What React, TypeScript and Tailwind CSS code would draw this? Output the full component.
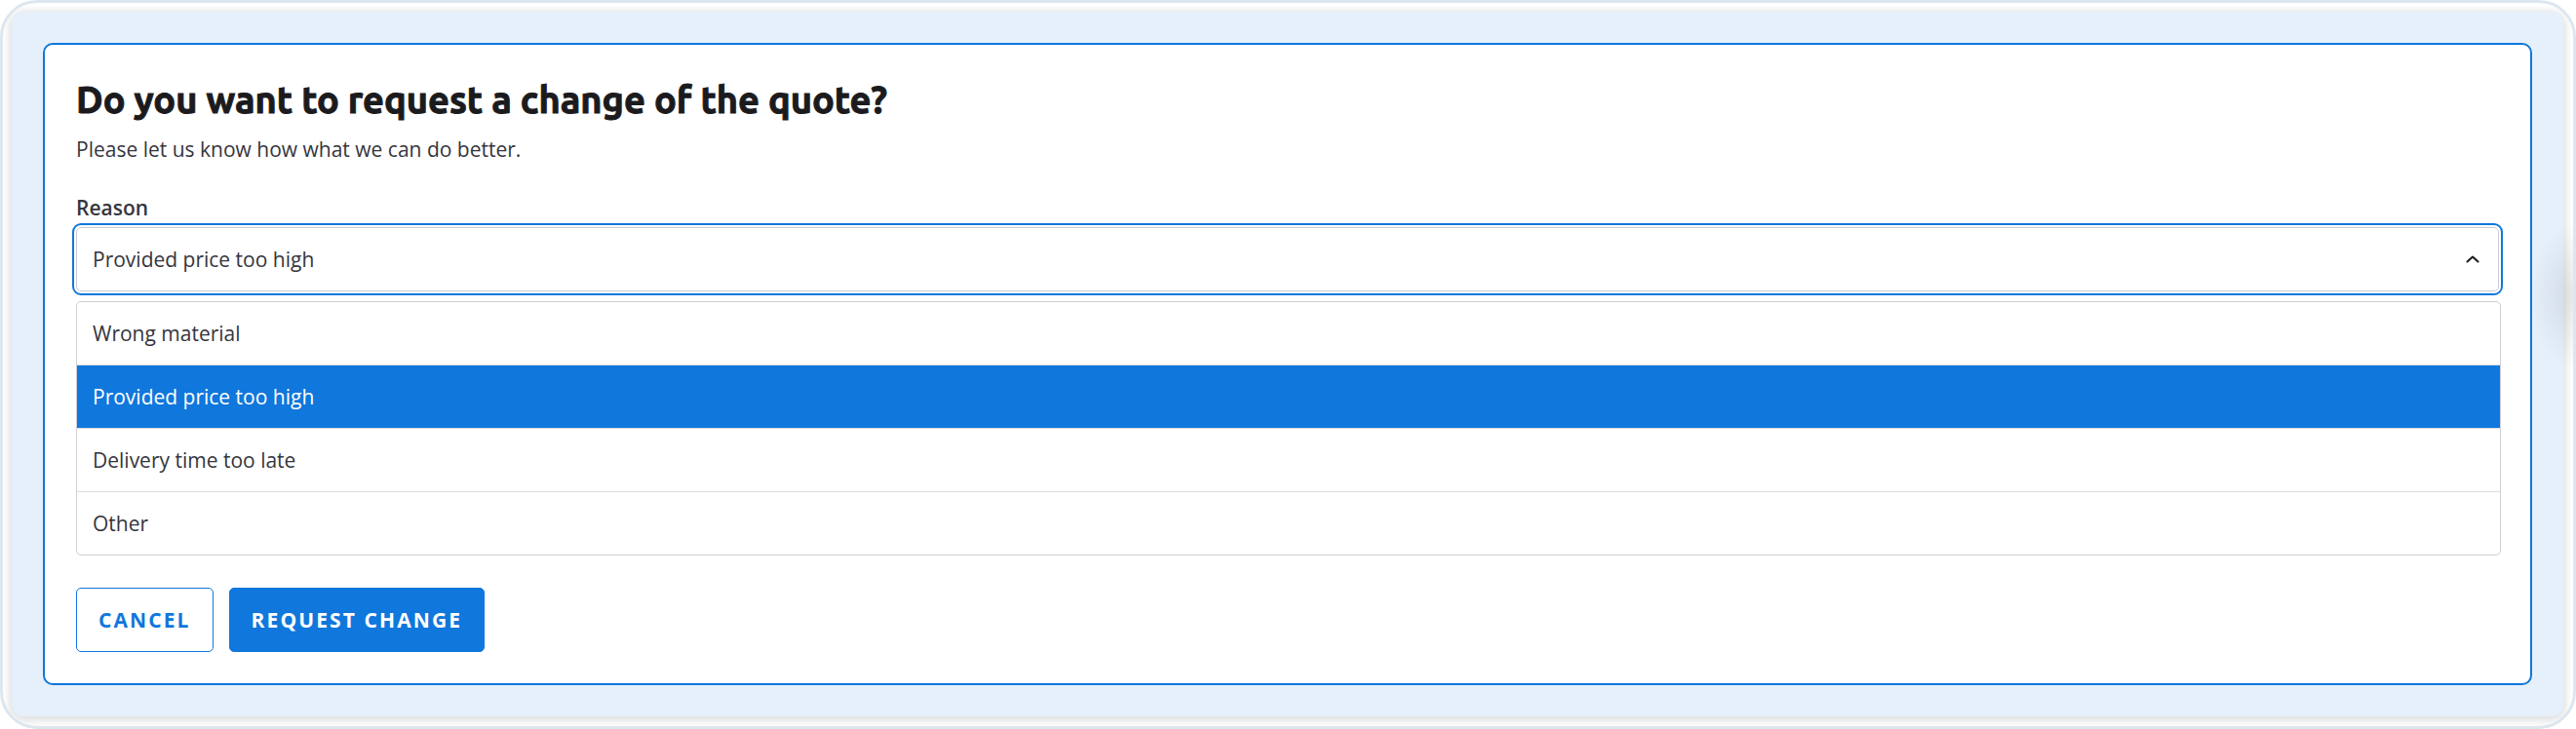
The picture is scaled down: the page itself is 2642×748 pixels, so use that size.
import { useState } from "react";

const reasons = ["Wrong material", "Provided price too high", "Delivery time too late", "Other"];

export default function App() {
  const [reason, setReason] = useState(reasons[1]);

  return (
    <div className="flex min-h-screen bg-white font-['Open_Sans',sans-serif] text-[21px] leading-8 text-[#35353d]">
      <div className="relative flex grow overflow-hidden rounded-[38px] border-[3px] border-[#dde6ee] bg-white pt-[9px] pr-[10px] pb-[10px] pl-[9px]">
        <main className="grow rounded-xl bg-[#e6f0fb] p-8 shadow-[0_2px_10px_2px_rgba(0,0,0,0.14)]">
          <form
            className="rounded-[10px] border-2 border-[#1077dc] bg-white p-8"
            onSubmit={(event) => event.preventDefault()}
          >
            <h1 className="font-[Ubuntu,'Noto_Sans',sans-serif] text-[38px] leading-[48px] font-bold text-[#1b1b1e] [-webkit-text-stroke:1px_#1b1b1e]">
              Do you want to request a change of the quote?
            </h1>
            <p className="mt-[11px]">Please let us know how what we can do better.</p>
            <label htmlFor="reason" className="mt-7 block font-semibold">
              Reason
            </label>
            <div className="relative mt-1">
              <select
                id="reason"
                value={reason}
                onChange={(event) => setReason(event.target.value)}
                className="block h-[66px] w-full appearance-none rounded-[5px] border border-[#cbcbd3] bg-white px-4 outline-2 outline-offset-2 outline-[#1077dc]"
              >
                {reasons.map((item) => (
                  <option key={item}>{item}</option>
                ))}
              </select>
              <svg
                className="pointer-events-none absolute top-[29px] right-5 h-2 w-[14px]"
                viewBox="0 0 14 8"
                fill="none"
                stroke="#1b1b1e"
                strokeWidth="2"
                strokeLinecap="round"
                strokeLinejoin="round"
                aria-hidden="true"
              >
                <path d="M1.5 6.5 7 1.5l5.500 5" />
              </svg>
            </div>
            <ul
              role="listbox"
              aria-label="Reason"
              className="mt-[10px] -mr-0.5 divide-y divide-[#dcdce0] overflow-hidden rounded-[5px] border border-[#cfcfd6]"
            >
              {reasons.map((item) => (
                <li
                  key={item}
                  role="option"
                  aria-selected={item === reason}
                  onClick={() => setReason(item)}
                  className="px-4 py-4 aria-selected:bg-[#1077dc] aria-selected:text-white"
                >
                  {item}
                </li>
              ))}
            </ul>
            <div className="mt-[33px] flex gap-4 font-bold tracking-widest">
              <button
                type="button"
                className="h-[66px] rounded-[5px] border border-[#1077dc] px-[22px] text-[#1077dc] uppercase"
              >
                Cancel
              </button>
              <button
                type="submit"
                className="h-[66px] rounded-[5px] border border-[#1077dc] bg-[#1077dc] px-[22px] text-white uppercase"
              >
                Request change
              </button>
            </div>
          </form>
        </main>
        <div className="pointer-events-none absolute top-[226px] right-[-40px] h-[150px] w-[84px] bg-[radial-gradient(closest-side,rgba(0,0,0,0.09),transparent)]" />
      </div>
    </div>
  );
}
